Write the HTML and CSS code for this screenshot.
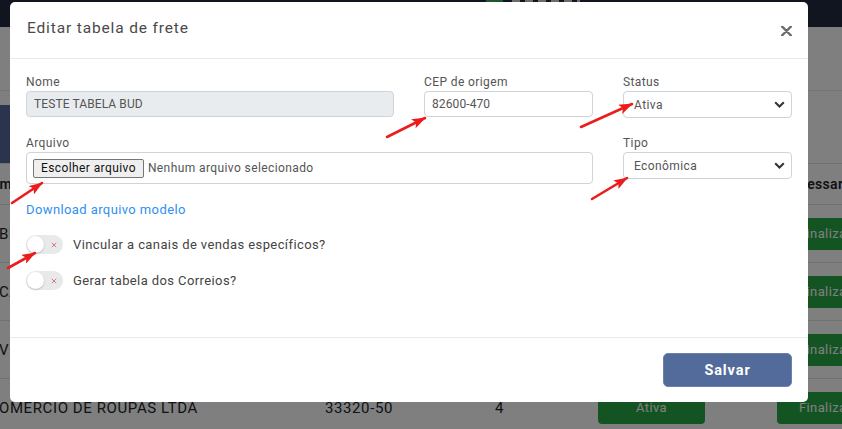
FILE: index.html
```html
<!doctype html>
<html lang="pt-BR">
<head>
<meta charset="utf-8">
<title>Tabelas de frete</title>
<link rel="stylesheet" href="styles.css">
</head>
<body>
<div class="page">
  <header class="topbar">
    <div class="brand"><span class="brand-mark"></span><span class="brand-name"></span></div>
  </header>
  <div class="toolbar"></div>
  <div class="titlebar"></div>
  <table class="grid">
    <thead>
      <tr><th class="c-name">Nome</th><th class="c-cep">CEP</th><th class="c-qty">Qtd</th><th class="c-status">Status</th><th class="c-act">Processar</th></tr>
    </thead>
    <tbody>
      <tr><td>BUD MODAS</td><td>82600-470</td><td>1</td><td><span class="pill">Ativa</span></td><td><span class="pill">Finalizado</span></td></tr>
      <tr><td>CASA BELA</td><td>80010-10</td><td>2</td><td><span class="pill">Ativa</span></td><td><span class="pill">Finalizado</span></td></tr>
      <tr><td>VESTE BEM</td><td>81200-20</td><td>3</td><td><span class="pill">Ativa</span></td><td><span class="pill">Finalizado</span></td></tr>
      <tr><td>OMERCIO DE ROUPAS LTDA</td><td>33320-50</td><td>4</td><td><span class="pill">Ativa</span></td><td><span class="pill">Finalizado</span></td></tr>
    </tbody>
  </table>
</div>

<div class="backdrop"></div>

<div class="modal">
  <div class="modal-header">
    <h5 class="modal-title">Editar tabela de frete</h5>
    <button class="close" type="button">
      <svg width="11" height="10" viewBox="0 0 11 10"><path d="M1 0.5 L10 9.5 M10 0.5 L1 9.5" stroke="#6b6b6b" stroke-width="2.4" stroke-linecap="round"/></svg>
    </button>
  </div>

  <div class="modal-body">
    <div class="form-grid">
      <div class="field span-2">
        <label>Nome</label>
        <input class="input" type="text" value="TESTE TABELA BUD" disabled>
      </div>
      <div class="field">
        <label>CEP de origem</label>
        <input class="input" type="text" value="82600-470">
      </div>
      <div class="field">
        <label>Status</label>
        <div class="select"><span>Ativa</span><svg width="11" height="7" viewBox="0 0 11 7"><path d="M1.2 1.2 L5.5 5.5 L9.8 1.2" fill="none" stroke="#333" stroke-width="2"/></svg></div>
      </div>
      <div class="field span-3">
        <label>Arquivo</label>
        <div class="file"><span class="file-btn">Escolher arquivo</span><span class="file-name">Nenhum arquivo selecionado</span></div>
      </div>
      <div class="field">
        <label>Tipo</label>
        <div class="select"><span>Econômica</span><svg width="11" height="7" viewBox="0 0 11 7"><path d="M1.2 1.2 L5.5 5.5 L9.8 1.2" fill="none" stroke="#333" stroke-width="2"/></svg></div>
      </div>
    </div>

    <a class="download" href="#">Download arquivo modelo</a>

    <div class="switch-row">
      <span class="switch"><span class="knob"></span><svg class="off" width="6" height="6" viewBox="0 0 6 6"><path d="M0.8 0.8 L5.2 5.2 M5.2 0.8 L0.8 5.2" stroke="#d9797b" stroke-width="1"/></svg></span>
      <span class="switch-label">Vincular a canais de vendas específicos?</span>
    </div>
    <div class="switch-row">
      <span class="switch"><span class="knob"></span><svg class="off" width="6" height="6" viewBox="0 0 6 6"><path d="M0.8 0.8 L5.2 5.2 M5.2 0.8 L0.8 5.2" stroke="#d9797b" stroke-width="1"/></svg></span>
      <span class="switch-label">Gerar tabela dos Correios?</span>
    </div>
  </div>

  <div class="modal-footer">
    <button class="btn-save" type="button">Salvar</button>
  </div>
</div>

<!-- red pointers drawn over the form -->
<svg class="marks" width="842" height="429" viewBox="0 0 842 429">
  <defs>
    <marker id="tip" markerUnits="userSpaceOnUse" markerWidth="14" markerHeight="10" viewBox="0 0 14 10" refX="13" refY="5" orient="auto">
      <path d="M0 0 L14 5 L0 10 L3 5 Z" fill="#ec1c1c"/>
    </marker>
  </defs>
  <g stroke="#ec1c1c" stroke-width="2.6" stroke-linecap="round" marker-end="url(#tip)">
    <line x1="387" y1="137" x2="425" y2="118"/>
    <line x1="581" y1="127" x2="632" y2="104"/>
    <line x1="12" y1="203" x2="42" y2="183"/>
    <line x1="592" y1="199" x2="627" y2="178"/>
    <line x1="8" y1="268" x2="35" y2="253"/>
  </g>
</svg>
</body>
</html>
```

FILE: styles.css
```css
* {
  box-sizing: border-box;
}
body {
  margin: 0;
  width: 842px;
  height: 429px;
  overflow: hidden;
  background: #fff;
  font-family: Roboto, "Liberation Sans", sans-serif;
  letter-spacing: 0.4px;
  color: #212529;
}

/* page behind the dialog */
.topbar {
  height: 27px;
  background: #222a3e;
  padding-left: 486px;
}
.brand {
  display: flex;
  gap: 9px;
  height: 2px;
}
.brand-mark {
  width: 17px;
  background: #35b060;
}
.brand-name {
  width: 68px;
  background: repeating-linear-gradient(90deg, #d8d8d8 0 8px, transparent 8px 13px);
}
.toolbar {
  height: 64px;
  border-bottom: 1px solid #e8e8e8;
}
.titlebar {
  margin-top: 14px;
  width: 240px;
  height: 58px;
  background: #56699b;
}
.grid {
  margin-left: -19px;
  width: 930px;
  border-collapse: collapse;
  table-layout: fixed;
  font-size: 15px;
  letter-spacing: 0.6px;
}
.grid th,
.grid td {
  text-align: left;
  padding: 0 0 0 10px;
  border-bottom: 1px solid #dee2e6;
  white-space: nowrap;
  overflow: hidden;
}
.grid th {
  height: 41px;
  border-top: 1px solid #dee2e6;
  font-size: 14px;
  font-weight: 600;
  letter-spacing: 0.3px;
}
.grid th.c-name {
  padding-left: 0;
}
.grid td {
  height: 58px;
}
.grid td:first-child {
  padding-left: 18px;
}
.c-name { width: 334px; }
.c-cep { width: 170px; }
.c-qty { width: 103px; }
.c-status { width: 179px; }
.c-act { width: 144px; }
.pill {
  display: inline-block;
  width: 107px;
  height: 32px;
  line-height: 32px;
  text-align: center;
  background: #28a745;
  color: #fff;
  border-radius: 4px;
  font-size: 13px;
  letter-spacing: 0.4px;
}
.backdrop {
  position: fixed;
  inset: 0;
  background: rgba(0, 0, 0, 0.5);
  z-index: 1;
}

/* dialog */
.modal {
  position: fixed;
  top: 2px;
  left: 10px;
  width: 798px;
  background: #fff;
  border-radius: 5px;
  z-index: 2;
}
.modal-header {
  height: 57px;
  padding: 0 16px 4px 17px;
  display: flex;
  align-items: center;
  justify-content: space-between;
  border-bottom: 1px solid #e9ecef;
}
.modal-title {
  margin: 0;
  font-size: 15.5px;
  font-weight: 400;
  color: #4a4a4a;
  letter-spacing: 0.85px;
}
.close {
  border: 0;
  background: none;
  padding: 0;
  margin-top: 5px;
  display: flex;
}
.modal-body {
  padding: 16px 16px 47px;
}
.form-grid {
  display: grid;
  grid-template-columns: repeat(4, 1fr);
  column-gap: 30px;
  row-gap: 18px;
}
.span-2 { grid-column: span 2; }
.span-3 { grid-column: span 3; }
.field label {
  display: block;
  font-size: 12px;
  line-height: 15px;
  margin-bottom: 1px;
  color: #555;
}
.input {
  display: block;
  width: 100%;
  height: 26px;
  padding: 0 7px;
  border: 1px solid #ced4da;
  border-radius: 4px;
  font: 12px Roboto, "Liberation Sans", sans-serif;
  letter-spacing: 0.1px;
  color: #555;
  background: #fff;
}
.input:disabled {
  background: #e9ecef;
  color: #555;
}
.select {
  height: 27px;
  padding: 0 6px 0 10px;
  display: flex;
  align-items: center;
  justify-content: space-between;
  border: 1px solid #ced4da;
  border-radius: 4px;
  font-size: 12px;
  color: #555;
}
.file {
  height: 32px;
  padding: 0 6px;
  display: flex;
  align-items: center;
  gap: 4px;
  border: 1px solid #ced4da;
  border-radius: 4px;
  font-size: 12px;
  color: #555;
}
.file-btn {
  height: 19px;
  line-height: 17px;
  padding: 0 7px;
  border: 1px solid #767676;
  border-radius: 2px;
  background: #efefef;
  color: #111;
}
.download {
  display: inline-block;
  margin-top: 18px;
  font-size: 13px;
  line-height: 16px;
  color: #2f8ff0;
  text-decoration: none;
}
.switch-row {
  display: flex;
  align-items: center;
  gap: 10px;
  margin-top: 17px;
}
.switch {
  width: 37px;
  height: 19px;
  padding: 1px 6px 1px 1px;
  display: flex;
  align-items: center;
  justify-content: space-between;
  border-radius: 10px;
  background: #e8e9eb;
}
.knob {
  width: 17px;
  height: 17px;
  border-radius: 50%;
  background: #fff;
  box-shadow: 0 1px 2px rgba(0, 0, 0, 0.2);
}
.switch-label {
  font-size: 13px;
  color: #444;
}
.modal-footer {
  padding: 15px 16px;
  display: flex;
  justify-content: flex-end;
  border-top: 1px solid #e9ecef;
}
.btn-save {
  width: 129px;
  height: 34px;
  border: 1px solid #6d81aa;
  border-radius: 5px;
  background: #526b9a;
  color: #fff;
  font: 700 14.5px Roboto, "Liberation Sans", sans-serif;
  letter-spacing: 0.9px;
}

.marks {
  position: fixed;
  top: 0;
  left: 0;
  z-index: 3;
  pointer-events: none;
}
```
